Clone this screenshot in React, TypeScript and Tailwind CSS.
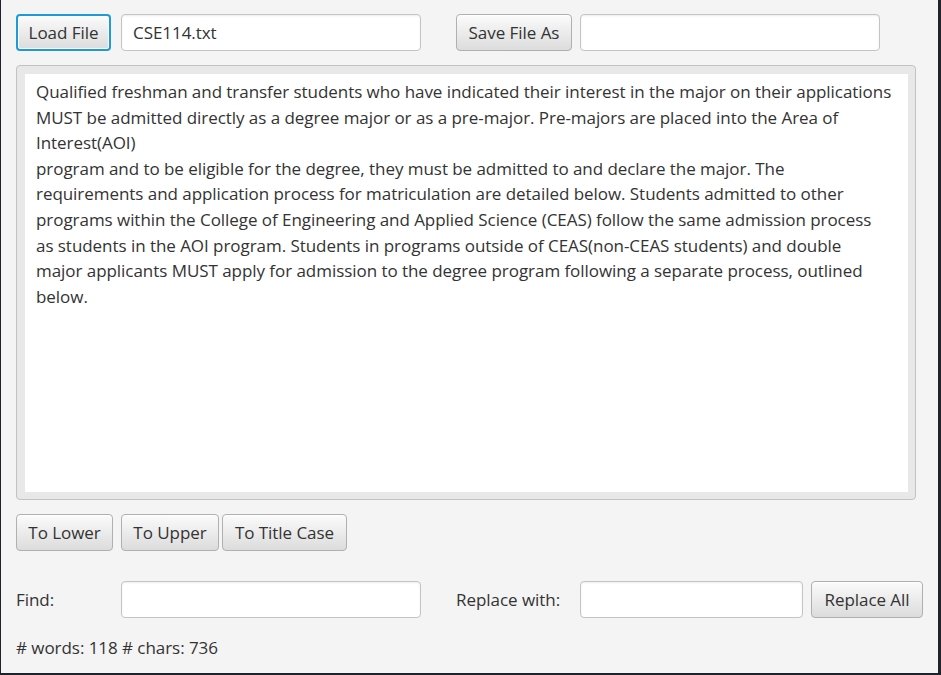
import React from "react";

const lines = [
  "Qualified freshman and transfer students who have indicated their interest in the major on their applications",
  "MUST be admitted directly as a degree major or as a pre-major. Pre-majors are placed into the Area of",
  "Interest(AOI)",
  "program and to be eligible for the degree, they must be admitted to and declare the major. The",
  "requirements and application process for matriculation are detailed below. Students admitted to other",
  "programs within the College of Engineering and Applied Science (CEAS) follow the same admission process",
  "as students in the AOI program. Students in programs outside of CEAS(non-CEAS students) and double",
  "major applicants MUST apply for admission to the degree program following a separate process, outlined",
  "below.",
];

const btn =
  "h-[37px] px-[10px] rounded-[4px] border border-[#b0b0b0] bg-gradient-to-b from-[#fbfbfb] to-[#dcdcdc] text-[#333] shadow-[inset_0_1px_0_#ffffff] flex items-center justify-center";

const field =
  "h-[37px] rounded-[4px] border border-[#c4c4c4] bg-white shadow-[inset_0_1px_2px_rgba(0,0,0,0.08)] px-[11px] flex items-center text-[#333]";

const App: React.FC = () => {
  return (
    <div
      className="w-[941px] h-[675px] bg-[#1f2329] pl-px pr-[3px] pb-[2px]"
      style={{ fontFamily: '"Open Sans", "Noto Sans", sans-serif' }}
    >
      <div className="w-full h-full bg-[#f4f4f4] text-[17px] tracking-[-0.05px] text-[#333] flex flex-col px-[15px] pt-[14px]">
        {/* top row */}
        <div className="flex items-center">
          <button className="h-[37px] w-[95px] rounded-[4px] border-2 border-[#1f9ad8] bg-gradient-to-b from-[#fbfbfb] to-[#dcdcdc] text-[#333] shadow-[inset_0_0_0_1px_#ffffff] flex items-center justify-center">
            Load File
          </button>
          <div className={`${field} w-[300px] ml-[10px]`}>CSE114.txt</div>
          <button className={`${btn} w-[116px] ml-[35px]`}>Save File As</button>
          <div className={`${field} w-[300px] ml-[8px]`} />
        </div>

        {/* text area */}
        <div className="mt-[14px] w-[900px] h-[435px] rounded-[4px] border border-[#c2c2c2] bg-[#e8e8e8] pl-[8px] pr-[7px] pt-[8px] pb-[7px]">
          <div className="w-full h-full bg-white pl-[11px] pt-[5px] leading-[25.6px]">
            {lines.map((l, i) => (
              <div key={i} className="whitespace-pre">
                {l}
              </div>
            ))}
          </div>
        </div>

        {/* case buttons */}
        <div className="flex items-center mt-[14px]">
          <button className={`${btn} w-[97px]`}>To Lower</button>
          <button className={`${btn} w-[98px] ml-[8px]`}>To Upper</button>
          <button className={`${btn} w-[125px] ml-[3px]`}>To Title Case</button>
        </div>

        {/* find / replace */}
        <div className="flex items-center mt-[30px]">
          <span className="w-[105px]">Find:</span>
          <div className={`${field} w-[300px]`} />
          <span className="ml-[35px] w-[124px]">Replace with:</span>
          <div className={`${field} w-[223px]`} />
          <button className={`${btn} w-[112px] ml-[8px]`}>Replace All</button>
        </div>

        <div className="mt-[17px]">
          # words: 118 # chars: 736
        </div>
      </div>
    </div>
  );
};

export default App;
